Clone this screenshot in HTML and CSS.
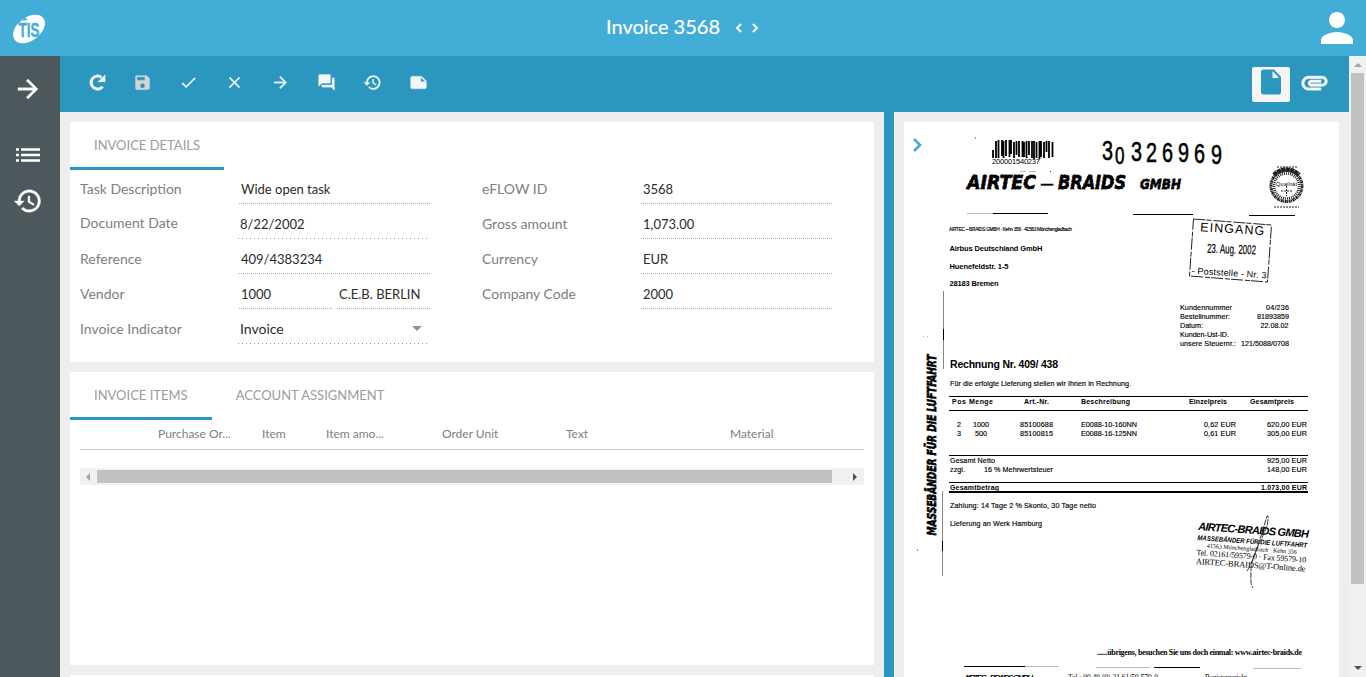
FILE: index.html
```html
<!DOCTYPE html>
<html lang="en">
<head>
<meta charset="utf-8">
<title>Invoice 3568</title>
<link rel="stylesheet" href="styles.css">
</head>
<body>
<header class="topbar">
  <svg class="logo" viewBox="0 0 34 30">
    <ellipse cx="17" cy="15" rx="18" ry="11.500" transform="rotate(-37 17 15)" fill="#fff"/>
    <path d="M4 11.500L13 3.500 16 6 7 7z" fill="#42add6"/>
    <text class="logo-text" x="6.500" y="22.500" textLength="21" lengthAdjust="spacingAndGlyphs">TIS</text>
  </svg>
  <div class="title"><span>Invoice 3568</span>
    <svg class="pager" viewBox="0 0 24 12"><path d="M6 2L2 6l4 4M18 2l4 4-4 4" fill="none" stroke="#fff" stroke-width="1.900"/></svg>
  </div>
  <svg class="user" viewBox="0 0 24 24"><path d="M12 12c2.210 0 4-1.790 4-4s-1.790-4-4-4-4 1.790-4 4 1.790 4 4 4zm0 2c-2.670 0-8 1.340-8 4v2h16v-2c0-2.660-5.330-4-8-4z"/></svg>
</header>
<div class="shell">
  <nav class="sidebar">
    <svg class="side-icon arrow" viewBox="0 0 24 24"><path d="M12 4l-1.410 1.410L16.170 11H4v2h12.170l-5.580 5.590L12 20l8-8z"/></svg>
    <svg class="side-list" viewBox="0 0 24 14"><path d="M0 .3h3v2.400H0zM5 .3h19v2.400H5zM0 5.800h3v2.400H0zM5 5.800h19v2.400H5zM0 11.300h3v2.400H0zM5 11.300h19v2.400H5z"/></svg>
    <svg class="side-icon hist" viewBox="0 0 24 24"><path d="M13 3c-4.970 0-9 4.030-9 9H1l3.890 3.890.07.140L9 12H6c0-3.870 3.130-7 7-7s7 3.130 7 7-3.130 7-7 7c-1.930 0-3.680-.790-4.940-2.060l-1.420 1.420C8.270 19.990 10.510 21 13 21c4.970 0 9-4.030 9-9s-4.030-9-9-9zm-1 5v5l4.280 2.540.720-1.210-3.500-2.080V8H12z"/></svg>
  </nav>
  <div class="main">
    <div class="toolbar">
      <div class="tools">
        <svg viewBox="0 0 24 24"><path d="M19.800 17.200A8.200 8.200 0 1 1 18.300 5.500" fill="none" stroke="#f5f5f5" stroke-width="3.800"/><path d="M23 2v9.300h-9.300z"/></svg>
        <svg class="off" viewBox="0 0 24 24"><path d="M17 3H5c-1.110 0-2 .9-2 2v14c0 1.100.890 2 2 2h14c1.100 0 2-.9 2-2V7l-4-4zm-5 16c-1.660 0-3-1.340-3-3s1.340-3 3-3 3 1.340 3 3-1.340 3-3 3zm3-10H5V5h10v4z"/></svg>
        <svg viewBox="0 0 24 24"><path d="M9 16.170L4.830 12l-1.420 1.410L9 19 21 7l-1.410-1.410z"/></svg>
        <svg viewBox="0 0 24 24"><path d="M19 6.410L17.590 5 12 10.590 6.410 5 5 6.410 10.590 12 5 17.590 6.410 19 12 13.410 17.590 19 19 17.590 13.410 12z"/></svg>
        <svg viewBox="0 0 24 24"><path d="M12 4l-1.410 1.410L16.170 11H4v2h12.170l-5.580 5.590L12 20l8-8z"/></svg>
        <svg viewBox="0 0 24 24"><path d="M21 6h-2v9H6v2c0 .550.450 1 1 1h11l4 4V7c0-.550-.450-1-1-1zm-4 6V3c0-.550-.450-1-1-1H3c-.550 0-1 .450-1 1v14l4-4h10c.550 0 1-.450 1-1z"/></svg>
        <svg viewBox="0 0 24 24"><path d="M13 3c-4.970 0-9 4.030-9 9H1l3.890 3.890.07.140L9 12H6c0-3.870 3.130-7 7-7s7 3.130 7 7-3.130 7-7 7c-1.930 0-3.680-.790-4.940-2.060l-1.420 1.420C8.270 19.990 10.510 21 13 21c4.970 0 9-4.030 9-9s-4.030-9-9-9zm-1 5v5l4.280 2.540.720-1.210-3.500-2.080V8H12z"/></svg>
        <svg viewBox="0 0 24 24"><path d="M22 10l-6-6H4c-1.100 0-2 .9-2 2v12.010c0 1.100.9 1.990 2 1.990l16-.010c1.100 0 2-.890 2-2v-8zm-7-4.500l5.500 5.500H15V5.500z"/></svg>
      </div>
      <div class="views">
        <span class="view-on"><svg viewBox="0 0 20 25"><path d="M2.500 0H13l7 7.500v15a2.500 2.500 0 0 1-2.500 2.500h-15A2.500 2.500 0 0 1 0 22.500v-20A2.500 2.500 0 0 1 2.500 0z"/><path class="fold" d="M11.500 1.500v7H18z"/></svg></span>
        <svg class="clip" viewBox="0 0 24 24"><path d="M2 12.500C2 9.460 4.460 7 7.500 7H18c2.210 0 4 1.790 4 4s-1.790 4-4 4H9.500C8.120 15 7 13.880 7 12.500S8.120 10 9.500 10H17v2H9.410c-.550 0-.550 1 0 1H18c1.100 0 2-.9 2-2s-.9-2-2-2H7.500C5.570 9 4 10.570 4 12.500S5.570 16 7.500 16H17v2H7.500C4.460 18 2 15.540 2 12.500z"/></svg>
      </div>
    </div>
    <div class="panes">
      <main class="left">
        <section class="card details">
          <div class="tabs"><span class="tab active">INVOICE DETAILS</span></div>
          <div class="form">
            <div class="col">
              <div class="row"><label>Task Description</label><span class="value">Wide open task</span></div>
              <div class="row"><label class="raised">Document Date</label><span class="value md">8/22/2002</span></div>
              <div class="row"><label>Reference</label><span class="value">409/4383234</span></div>
              <div class="row"><label>Vendor</label><span class="pair"><span class="value">1000</span><span class="value">C.E.B. BERLIN</span></span></div>
              <div class="row"><label>Invoice Indicator</label><span class="value md select">Invoice<i class="caret"></i></span></div>
            </div>
            <div class="col">
              <div class="row"><label>eFLOW ID</label><span class="value">3568</span></div>
              <div class="row"><label>Gross amount</label><span class="value">1,073.00</span></div>
              <div class="row"><label>Currency</label><span class="value">EUR</span></div>
              <div class="row"><label>Company Code</label><span class="value">2000</span></div>
            </div>
          </div>
        </section>
        <section class="card items">
          <div class="tabs"><span class="tab active">INVOICE ITEMS</span><span class="tab">ACCOUNT ASSIGNMENT</span></div>
          <div class="thead"><span></span><span>Purchase Or...</span><span>Item</span><span>Item amo...</span><span>Order Unit</span><span>Text</span><span>Material</span></div>
          <div class="hscroll"><i class="tri-l"></i><span class="hthumb"></span><i class="tri-r"></i></div>
        </section>
        <section class="card rest"></section>
      </main>
      <div class="splitter"></div>
      <aside class="right">
        <svg class="scan" viewBox="904 122 435 555">
          <path d="M914 139l6 6-6 6" fill="none" stroke="#42add6" stroke-width="2.600"/>
          <g class="ink">
            <path class="bars" d="M993 150v8M996 141v17M998.500 140v18M1002 140v16M1003.500 141v17M1006 140v16M1009.500 140v17M1011 140v14M1014 142v16M1016.500 141v14M1019 141v16M1022.500 141v16M1024 142v15M1026.500 141v17M1029 141v14M1032 141v17M1034 141v18M1036.500 142v16M1039.500 141v18M1041 141v16M1044 142v16M1046.500 141v11M1049 141v17M1052.500 142v15"/>
            <text x="992" y="164" font-size="7.500" textLength="48">200001540237</text>
            <g class="num"><text x="1102" y="160" textLength="11" lengthAdjust="spacingAndGlyphs">3</text><text class="small" x="1115" y="163.500" textLength="9.500" lengthAdjust="spacingAndGlyphs">0</text><text x="1131" y="161" textLength="11" lengthAdjust="spacingAndGlyphs">3</text><text x="1146" y="162" textLength="11" lengthAdjust="spacingAndGlyphs">2</text><text x="1162" y="162" textLength="11" lengthAdjust="spacingAndGlyphs">6</text><text x="1178" y="162" textLength="11" lengthAdjust="spacingAndGlyphs">9</text><text x="1194" y="163" textLength="11" lengthAdjust="spacingAndGlyphs">6</text><text x="1211" y="163.500" textLength="11" lengthAdjust="spacingAndGlyphs">9</text></g>
            <g class="brush"><text x="967" y="189" font-size="19" textLength="69" lengthAdjust="spacingAndGlyphs">AIRTEC</text><text x="1058" y="189" font-size="19" textLength="68" lengthAdjust="spacingAndGlyphs">BRAIDS</text><text x="1140" y="189" font-size="14" textLength="41" lengthAdjust="spacingAndGlyphs">GMBH</text></g>
            <text x="1041" y="190" font-size="20" textLength="12" lengthAdjust="spacingAndGlyphs" stroke="#000" stroke-width=".5">–</text>
            <path class="thin" d="M993 213.500h55M1133 214.500h60M1249 215.500h46" /><path class="faint" d="M967 213.500h26M1020 171.500h6M1029 171.500h7"/>
            <g class="seal"><circle cx="1286.500" cy="186" r="15.500" stroke-width="3" stroke-dasharray="2 .6 1 .4"/><circle cx="1286.500" cy="186" r="12.500" stroke-width="2.500" stroke-dasharray="1 1"/><path d="M1274 175a17 17 0 0 1 25 0" stroke-width="4.500" stroke-dasharray="4 .4"/><path d="M1281 191h11M1286.500 186v10M1277 167h20M1274 207h25" stroke-width="1" stroke-dasharray="2 1"/></g>
            <text x="1276" y="186" font-size="5.500" textLength="21">Qualität</text>
            <text x="949" y="231" font-size="4.800" textLength="123" stroke="#000" stroke-width=".15">AIRTEC – BRAIDS GMBH · Kehn 356 · 41563 Mönchengladbach</text>
            <g class="b" font-size="7.500"><text x="949.500" y="251" textLength="93">Airbus Deutschland GmbH</text><text x="949.500" y="269" textLength="59">Huenefeldstr. 1-5</text><text x="949.500" y="286" textLength="49">28183 Bremen</text></g>
            <path class="dashbox" d="M1193.500 219l78 6-4 57-78-6z"/>
            <g transform="rotate(3.500 1230 250)"><text x="1199" y="233" font-size="12.500" textLength="64">EINGANG</text><text x="1193" y="276" font-size="9" textLength="75">- Poststelle - Nr. 3</text></g>
            <text class="narrow" x="1207" y="253.500" font-size="13" textLength="49" lengthAdjust="spacingAndGlyphs" transform="rotate(2 1230 250)">23. Aug. 2002</text>
            <g class="print" font-size="7.200">
              <text x="1180" y="310.400" textLength="52">Kundennummer</text><text x="1180" y="319.400" textLength="50">Bestellnummer:</text><text x="1180" y="328.400" textLength="23">Datum:</text><text x="1180" y="337.400" textLength="49">Kunden-Ust-ID.</text><text x="1180" y="346.400" textLength="56">unsere Steuernr.:</text>
              <text x="1266" y="310.400" textLength="23">04/236</text><text x="1257" y="319.400" textLength="32">81893859</text><text x="1260.500" y="328.400" textLength="28">22.08.02</text><text x="1241" y="346.400" textLength="48">121/5088/0708</text>
            </g>
            <path class="side-rule" d="M943.500 291v78M942.500 491v85"/><path d="M943.500 329v11M942.500 541v10" stroke="#000"/>
            <text class="brush" font-size="12" textLength="181" lengthAdjust="spacingAndGlyphs" transform="translate(935.500 535.500) rotate(-90)">MASSEBÄNDER FÜR DIE LUFTFAHRT</text>
            <text class="b" x="950" y="367.500" font-size="10.500" textLength="108">Rechnung Nr. 409/ 438</text>
            <text class="print" x="950" y="386" font-size="7.200" textLength="181">Für die erfolgte Lieferung stellen wir Ihnen in Rechnung.</text>
            <path class="rules" d="M949 396.500h359M949 410.500h359M949 455.500h359M949 482.500h359"/>
            <path d="M949 492h359" stroke="#000" stroke-width="2"/>
            <g class="b" font-size="7"><text x="952" y="404" textLength="14">Pos</text><text x="969" y="404" textLength="24">Menge</text><text x="1024" y="404" textLength="25">Art.-Nr.</text><text x="1081" y="404" textLength="49">Beschreibung</text><text x="1189" y="404" textLength="38">Einzelpreis</text><text x="1250" y="404" textLength="44">Gesamtpreis</text><text x="950" y="490" textLength="49">Gesamtbetrag</text><text x="1261" y="489.500" textLength="46">1.073,00 EUR</text></g>
            <g class="print" font-size="7.200">
              <text x="957" y="426.500">2</text><text x="973" y="426.500" textLength="16">1000</text><text x="1020" y="426.500" textLength="33">85100688</text><text x="1081" y="426.500" textLength="56">E0088-10-160NN</text><text x="1204" y="426.500" textLength="32">0,62 EUR</text><text x="1267" y="426.500" textLength="40">620,00 EUR</text>
              <text x="957" y="435.500">3</text><text x="975" y="435.500" textLength="12">500</text><text x="1020" y="435.500" textLength="33">85100815</text><text x="1081" y="435.500" textLength="56">E0088-16-125NN</text><text x="1204" y="435.500" textLength="32">0,61 EUR</text><text x="1267" y="435.500" textLength="40">305,00 EUR</text>
              <text x="950" y="463" textLength="45">Gesamt Netto</text><text x="950" y="471.500" textLength="15">zzgl.</text><text x="984" y="471.500" textLength="69">16 % Mehrwertsteuer</text><text x="1267" y="463" textLength="40">925,00 EUR</text><text x="1267" y="471.500" textLength="40">148,00 EUR</text>
              <text x="950" y="508" textLength="146">Zahlung: 14 Tage 2 % Skonto, 30 Tage netto</text><text x="950" y="526" textLength="92">Lieferung an Werk Hamburg</text>
            </g>
            <g transform="rotate(4 1198 530)"><text class="brush2" x="1198" y="530" font-size="11" textLength="111">AIRTEC-BRAIDS GMBH</text><text class="brush2" x="1198" y="540" font-size="7" textLength="110" lengthAdjust="spacingAndGlyphs">MASSEBÄNDER FÜR DIE LUFTFAHRT</text>
            <g class="serif"><text x="1208" y="547" font-size="6" textLength="90">41563 Mönchengladbach · Kehn 356</text><text x="1198" y="555" font-size="8" textLength="110">Tel. 02161/59579-0 · Fax 59579-10</text><text x="1198" y="564" font-size="8.500" textLength="110">AIRTEC-BRAIDS@T-Online.de</text></g></g>
            <path class="sign" d="M1247 571c6-8 14-35 20-55 2-2 1 6 0 10-4 11-16 32-16 43 0 8-1 16 2 19"/>
            <text class="serif b" x="1097" y="655" font-size="8" textLength="205">......übrigens, besuchen Sie uns doch einmal: www.airtec-braids.de</text>
            <path class="rules" d="M964 666.500h61M1154 667.500h46"/><path class="faint" d="M1025 666.500h34M1096 667.500h54M1253 668.500h48"/>
            <g class="brush2"><text x="964" y="680" font-size="8" textLength="69">AIRTEC – BRAIDS GMBH</text></g>
            <text class="serif" x="1068" y="680" font-size="7.500" textLength="90">Tel.: 00 49 (0) 21 61/59 579-0</text><text class="serif" x="1205" y="680" font-size="7.500" textLength="42">Registergericht</text>
            <path d="M917 550h1M975 138h1M1050 171.500h1" stroke="#333"/><path class="faint" d="M923 336.500h1M927 336.500h1"/>
          </g>
        </svg>
      </aside>
    </div>
  </div>
  <div class="vscroll"><i class="tri-u"></i><span class="vthumb"></span><i class="tri-d"></i></div>
</div>
</body>
</html>
```
FILE: styles.css
```css
* { box-sizing: border-box; }
body { margin: 0; height: 677px; overflow: hidden; display: flex; flex-direction: column; font: 14px/20px Lato, "Liberation Sans", sans-serif; color: #2b2b2b; background: #efeeec; }
svg { display: block; flex: none; }
.topbar { height: 56px; flex: none; background: #42add6; display: flex; justify-content: space-between; align-items: center; padding: 0 5px 0 12px; }
.logo { width: 34px; height: 30px; margin-top: 2px; }
.logo-text { font: bold 21px "Liberation Sans", sans-serif; fill: #42add6; stroke: #42add6; stroke-width: .4; }
.title { display: flex; align-items: center; gap: 15px; color: #fff; font-size: 20px; padding-left: 6px; margin-top: -4px; -webkit-text-stroke: .2px #fff; }
.pager { width: 24px; height: 12px; margin-top: 3px; }
.user { width: 48px; height: 48px; fill: #fff; }
.shell { flex: 1; display: flex; min-height: 0; }
.sidebar { width: 60px; flex: none; background: #4c585c; fill: #fff; padding-top: 18px; display: flex; flex-direction: column; align-items: center; }
.side-icon { width: 30px; height: 30px; stroke: #fff; stroke-width: .3; }
.arrow { margin-right: 4px; }
.side-list { width: 24px; height: 14px; margin: 44px 4px 0 0; }
.hist { margin: 24px 4px 0 0; }
.main { flex: 1; display: flex; flex-direction: column; min-width: 0; }
.toolbar { height: 56px; flex: none; background: #2b97bf; display: flex; justify-content: space-between; padding: 0 19px 0 27px; }
.tools { display: flex; gap: 27px; padding-top: 16.5px; fill: #f5f5f5; }
.tools svg { width: 19px; height: 19px; stroke: #f5f5f5; stroke-width: .3; }
.tools .off { fill: #d3d3d3; stroke: #d3d3d3; }
.views { display: flex; gap: 9px; padding-top: 11px; }
.view-on { width: 38px; height: 35px; background: #f5f5f5; border-radius: 2px; padding: 2px 0 0 9px; }
.view-on svg { width: 20px; height: 26px; fill: #2b97bf; }
.view-on .fold { fill: #f5f5f5; }
.clip { width: 31px; height: 31px; fill: #f5f5f5; stroke: #f5f5f5; stroke-width: .3; }
.panes { flex: 1; display: flex; min-height: 0; }
.left { width: 824px; padding: 10px; display: flex; flex-direction: column; gap: 10px; overflow: hidden; }
.card { background: #fff; flex: none; }
.details { height: 240px; }
.items { height: 293px; }
.rest { height: 40px; }
.tabs { height: 48px; display: flex; color: #9c9c9c; font-size: 13px; }
.tab { padding: 13px 24px 0; border-bottom: 3px solid transparent; }
.active { border-bottom-color: #2b97bf; }
.form { display: flex; gap: 50px; padding: 1px 0 0 10px; }
.col { width: 352px; }
.row { height: 35px; display: flex; align-items: flex-start; padding-right: 2px; }
.row label { flex: 1; color: #808080; padding-top: 8px; }
.row .raised { padding-top: 7px; }
.value { width: 191px; height: 33px; padding: 8px 0 0 2px; font-size: 13px; background: repeating-linear-gradient(90deg, #aaa 0 1px, transparent 1px 2px) bottom / 100% 1px no-repeat; }
.md { width: 189px; margin-right: 3px; background: repeating-linear-gradient(90deg, #949494 0 1px, transparent 1px 4px) bottom / 100% 1px no-repeat; }
.pair { display: flex; gap: 5px; }
.pair .value { width: 93px; }
.select { display: flex; justify-content: space-between; padding-right: 5px; font-size: 14px; }
.caret { border: 5px solid transparent; border-top-color: #949494; margin-top: 7px; height: 5px; }
.thead { margin: 0 10px; height: 30px; padding-top: 4px; border-bottom: 1px solid #ccc; display: grid; grid-template-columns: 78px 104px 64px 116px 124px 164px 1fr; color: #808080; font-size: 12px; }
.hscroll { margin: 18px 10px 0; height: 17px; background: #f1f1f1; display: flex; align-items: center; }
.hthumb { width: 735px; height: 13px; background: #c1c1c1; }
.tri-l, .tri-r { border: 4px solid transparent; width: 4px; height: 8px; }
.tri-l { border-left: 0; border-right-color: #a3a3a3; margin: 0 7px 0 6px; }
.tri-r { border-right: 0; border-left-color: #505050; margin-left: 21px; }
.splitter { width: 10px; background: #2b97bf; }
.right { flex: 1; padding: 10px 10px 0; }
.scan { width: 435px; height: 555px; background: #fff; }
.vscroll { width: 17px; background: #f1f1f1; display: flex; flex-direction: column; align-items: center; }
.vthumb { width: 13px; height: 511px; background: #c1c1c1; }
.tri-u, .tri-d { border: 4px solid transparent; width: 8px; height: 4px; }
.tri-u { border-top: 0; border-bottom-color: #a3a3a3; margin: 7px 0 6px; }
.tri-d { border-bottom: 0; border-top-color: #505050; margin-top: 82px; }
.ink { font-family: "Liberation Sans", Arial, sans-serif; fill: #000; }
.print { stroke: #000; stroke-width: .15; }
.b { font-weight: bold; }
.bars { stroke: #000; stroke-width: 1.8; }
.num { font-size: 28px; stroke: #000; stroke-width: .6; }
.num .small { font-size: 24px; }
.brush { font-family: "DejaVu Sans", sans-serif; font-weight: bold; font-style: italic; stroke: #000; stroke-width: .9; stroke-dasharray: 3 1; }
.brush2 { font-weight: bold; font-style: italic; }
.thin, .rules { stroke: #000; stroke-width: 1; fill: none; }
.faint { stroke: #bbb; fill: none; }
.seal { stroke: #222; fill: none; }
.dashbox { fill: none; stroke: #222; stroke-dasharray: 12 1 5 2; }
.narrow { stroke: #000; stroke-width: .2; }
.side-rule { stroke: #888; fill: none; }
.serif { font-family: "Liberation Serif", "Times New Roman", serif; }
.sign { fill: none; stroke: #222; stroke-width: .9; stroke-dasharray: 6 1; }
```
